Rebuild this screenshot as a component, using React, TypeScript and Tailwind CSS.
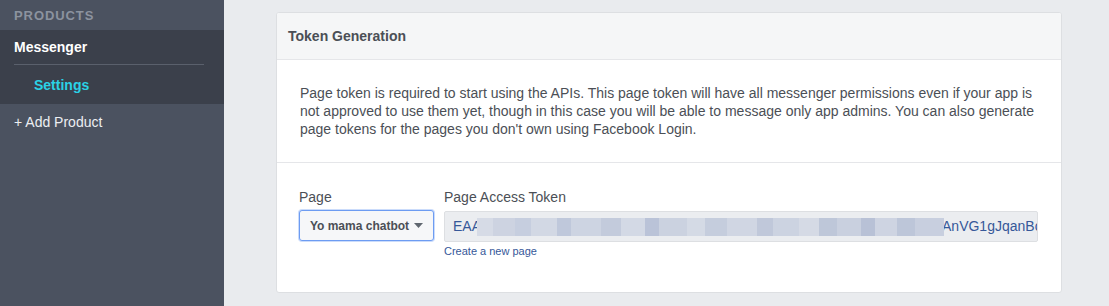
const blurBlocks = [
  { w: 16, c: "#d6dbe6" },
  { w: 22, c: "#cdd3e1" },
  { w: 16, c: "#c6cedf" },
  { w: 26, c: "#d2d8e4" },
  { w: 14, c: "#bfc8db" },
  { w: 30, c: "#cdd4e2" },
  { w: 20, c: "#c3cbdc" },
  { w: 24, c: "#d3d9e5" },
  { w: 14, c: "#bac3d8" },
  { w: 28, c: "#cbd2e0" },
  { w: 18, c: "#d4dae5" },
  { w: 22, c: "#c5cddd" },
  { w: 30, c: "#d0d6e3" },
  { w: 16, c: "#c0c8da" },
  { w: 26, c: "#ccd3e1" },
  { w: 20, c: "#d5dae5" },
  { w: 18, c: "#bec7d9" },
  { w: 24, c: "#c9d0df" },
  { w: 14, c: "#b8c1d6" },
  { w: 22, c: "#ced4e2" },
  { w: 18, c: "#bdc6d9" },
  { w: 29, c: "#c8cfdf" },
];

export default function App() {
  return (
    <div
      className="flex w-[1109px] h-[306px] overflow-hidden bg-[#e9ebee]"
      style={{ fontFamily: '"Liberation Sans", Arial, sans-serif' }}
    >
      {/* Sidebar */}
      <aside className="w-[224px] shrink-0 bg-[#4b5260] flex flex-col">
        <p className="px-[14px] pt-[8px] h-[30px] text-[13px] font-bold uppercase tracking-[0.07em] text-[#8c939f] leading-[16px]">
          Products
        </p>
        <div className="bg-[#3b404b] h-[74px] flex flex-col">
          <p className="px-[14px] pt-[8px] h-[34px] text-[14px] font-bold text-white leading-[18px]">
            Messenger
          </p>
          <div className="mx-[14px] w-[190px] border-t border-[#5a606c]" />
          <p className="pl-[34px] pt-[11px] text-[14px] font-bold text-[#2ad2e6] leading-[18px]">
            Settings
          </p>
        </div>
        <p className="px-[14px] pt-[9px] text-[14px] text-[#eceef2] leading-[18px]">
          + Add Product
        </p>
      </aside>

      {/* Main */}
      <main className="flex-1 pt-[12px]">
        <section className="ml-[52px] w-[786px] bg-white border border-[#dddfe2] rounded-[3px] overflow-hidden">
          <header className="h-[47px] bg-[#f5f6f7] border-b border-[#e5e6e9] flex items-center px-[11px]">
            <h2 className="text-[14px] font-bold text-[#4b4f56]">Token Generation</h2>
          </header>

          <div className="px-[23px] pt-[24px] pb-[24px] border-b border-[#e5e6e9]">
            <p className="text-[14px] leading-[18px] text-[#4b4f56]">
              Page token is required to start using the APIs. This page token will have all messenger permissions even if your app is
              not approved to use them yet, though in this case you will be able to message only app admins. You can also generate
              page tokens for the pages you don't own using Facebook Login.
            </p>
          </div>

          <div className="pl-[22px] pr-[23px] pt-[25px] pb-[34px] flex gap-[10px]">
            <div className="flex flex-col gap-[4px] w-[135px] shrink-0">
              <label className="text-[14px] leading-[18px] text-[#4b4f56]">Page</label>
              <button className="h-[31px] w-[135px] rounded-[3px] border border-[#6d9cf2] bg-[#f6f7f9] shadow-[0_0_0_1px_#cbdcfb] flex items-center justify-center gap-[5px] text-[12px] font-bold text-[#4b4f56]">
                Yo mama chatbot
                <svg width="9" height="5" viewBox="0 0 9 5">
                  <path d="M0 0h9L4.5 5z" fill="#606770" />
                </svg>
              </button>
            </div>

            <div className="flex-1 flex flex-col gap-[4px] min-w-0">
              <label className="text-[14px] leading-[18px] text-[#4b4f56]">Page Access Token</label>
              <div className="h-[31px] mt-[1px] rounded-[2px] border border-[#dddfe2] bg-[#ebedf0] flex items-center pl-[8px] overflow-hidden whitespace-nowrap text-[14px] text-[#365899]">
                <span>EAA</span>
                <div className="relative z-10 flex h-[18px] shrink-0 -ml-[4px]">
                  {blurBlocks.map((b, i) => (
                    <div key={i} className="h-full" style={{ width: b.w, background: b.c }} />
                  ))}
                </div>
                <span className="-ml-[2px]">AnVG1gJqanBc</span>
              </div>
              <a className="text-[11px] leading-[14px] text-[#365899] -mt-[2px]" href="#">
                Create a new page
              </a>
            </div>
          </div>
        </section>
      </main>
    </div>
  );
}
